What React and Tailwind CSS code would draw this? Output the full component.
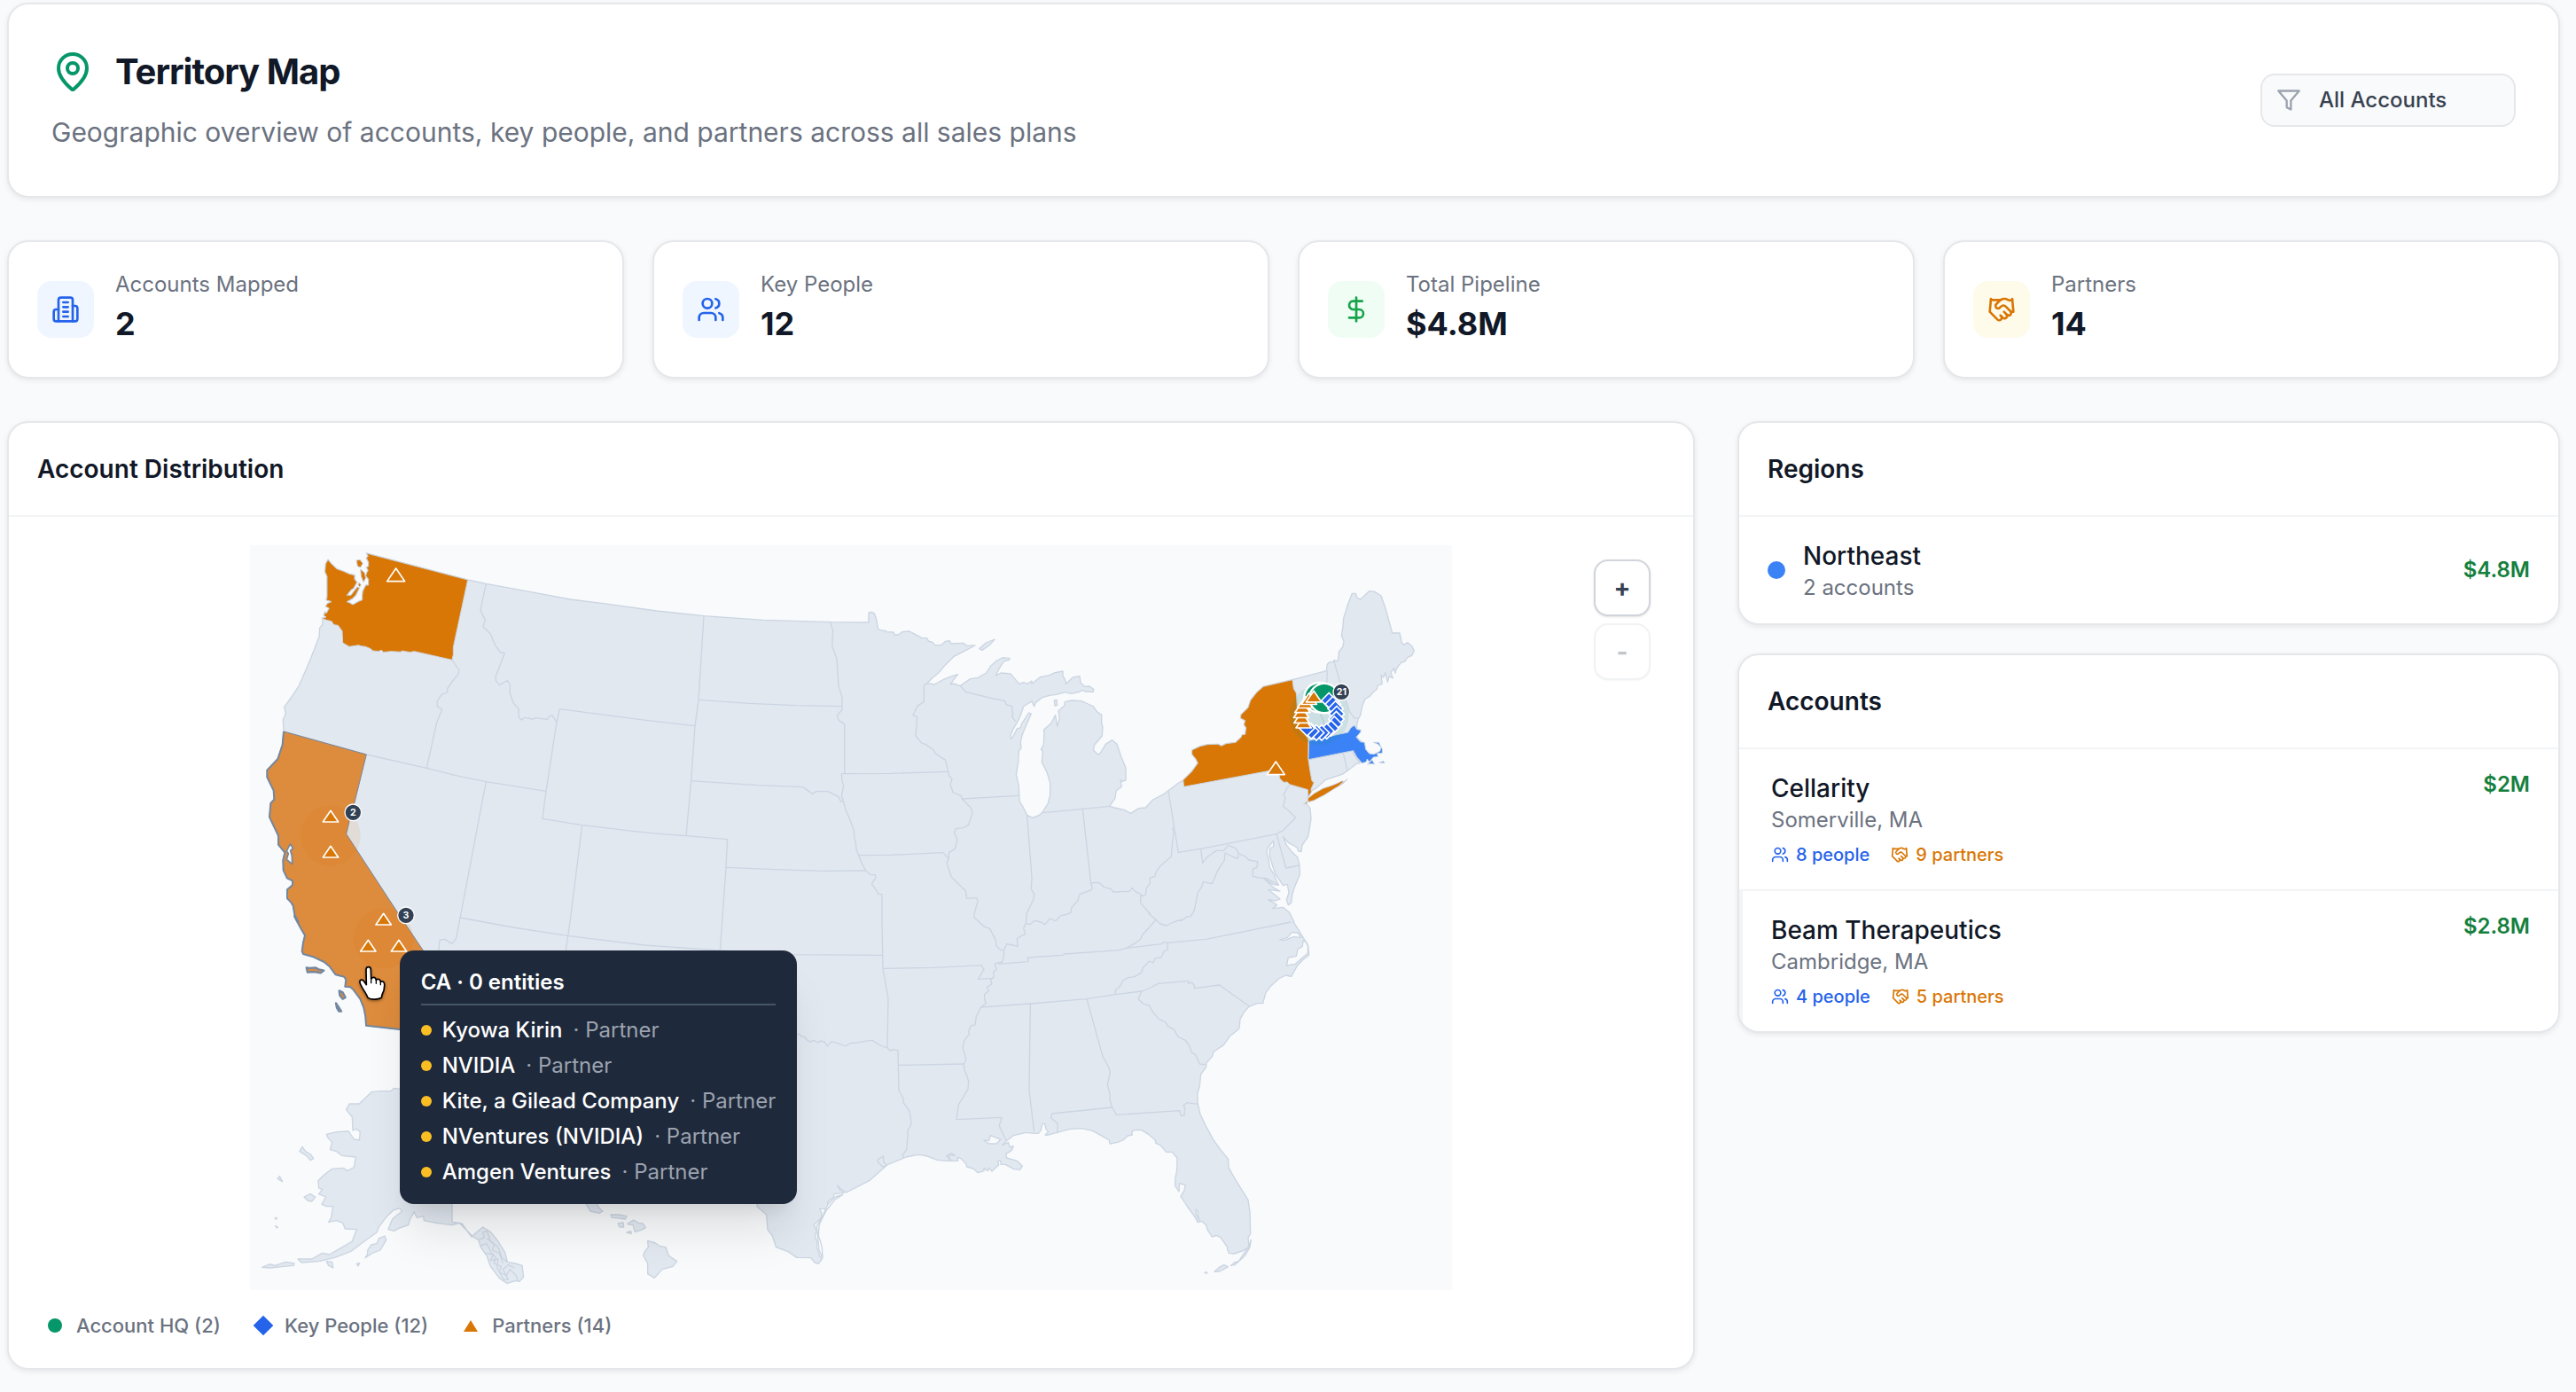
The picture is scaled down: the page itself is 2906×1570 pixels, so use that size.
import { DollarSign, Handshake, MapPin, Users } from "lucide-react";

// The map outline is stored per tile, each one with its own origin and x scale.
const TILES = {
  nw: { dx: 0, dy: 0, sx: 1 },
  n: { dx: 1350, dy: 0, sx: 1 },
  ne: { dx: 2700, dy: 0, sx: 1 },
  sw: { dx: 0, dy: 1260, sx: 1.186 },
  s: { dx: 1560, dy: 1260, sx: 1 },
  se: { dx: 2700, dy: 1260, sx: 1 },
};

const toPoints = (...segments) =>
  segments
    .map(([tile, coords]) => {
      const { dx, dy, sx } = TILES[tile];
      return coords
        .trim()
        .split(/\s+/)
        .map((pair) => {
          const [x, y] = pair.split(",").map(Number);
          return `${Math.round(x * sx + dx)},${y + dy}`;
        })
        .join(" ");
    })
    .join(" ");

const WA_COAST =
  "248,262 262,258 254,252 258,240 262,246 272,228 260,222 266,212 280,206 262,200 265,190 265,120 258,105 260,78 268,64 280,78 298,95 320,103 340,112 358,116 358,130 366,140 355,160 346,166 332,184 346,184 358,168 368,156 374,160 362,184 350,196 332,206 342,210 352,216 372,205 384,200 384,185 386,170 396,150 405,150 405,130 396,118 400,106 404,100 398,90 405,86 405,72 398,58 404,52 398,42";

const CA_COAST = [
  ["sw", "510,400 430,393 335,380 333,350 328,320 318,290 298,258 290,250 275,248 277,225 272,215 248,208 230,180 215,165 185,148 155,138 152,128 155,100 160,75 150,55 135,22 130,10"],
  ["nw", "168,1290 155,1265 150,1235 142,1222 130,1210 130,1180 148,1165 148,1150 130,1142 117,1115 116,1080 122,1055 100,1028 100,998 70,935 74,888 86,875 84,845 62,800 62,776 98,738 114,690 118,645"],
];

const MAINLAND = toPoints(
  ["nw", "398,42 741,132 803,145 950,172 1088,198 1200,212"],
  ["n", "30,237 190,254 390,268 620,275 748,276 748,243 758,241 768,247 775,270 779,297 790,303 806,304 806,308 832,309 835,318 848,318 862,308 885,306 905,316 928,329 945,329 950,339 965,344 972,353 993,353 1008,340 1022,338 1026,348 1068,346 1080,355 1108,354 1070,374 1035,392 1005,422 985,446 962,465 945,482 970,486 1003,468 1030,458 1050,452 1036,468 1025,486 1035,483 1058,491 1092,467 1118,463 1146,447 1162,422 1182,405 1203,395 1226,398 1222,404 1206,407 1190,431 1178,456 1195,447 1228,450 1245,470 1258,484 1272,479 1285,484 1300,474 1300,484 1328,461"],
  ["ne", "10,455 25,447 55,441 55,458 62,468 66,484 82,468 90,462 112,458 115,480 128,493 145,492 159,502 158,511 130,510 122,505 108,512 85,517 62,512 32,520 10,523"],
  ["n", "1335,530 1312,548 1308,560 1300,543 1285,552 1272,560 1262,590 1250,615 1235,640 1227,662 1230,670 1238,660 1250,636 1262,632 1265,620 1278,600 1290,582 1298,585 1285,615 1268,655 1262,680 1264,702 1256,710 1254,750 1247,790 1256,830 1258,880 1270,900 1284,928 1302,937 1322,930 1335,920 1355,888 1362,860 1362,820 1352,785 1334,748 1337,712 1331,706 1340,690 1342,650 1340,640 1365,618"],
  ["ne", "30,590 36,628 44,600 40,575 60,558 62,545 85,540 118,542 140,552 158,560 170,578 186,588 186,620 190,628 188,660 162,690 158,708 175,724 182,718 200,688 222,674 238,688 252,730 268,768 268,810 255,814 250,808 254,832 235,846 232,870 213,898 230,903 262,910 285,922 312,905 335,903 360,876 398,856 440,824 462,810 492,780 512,752 505,738 492,722 492,708 520,695 545,689 580,688 592,694 608,686 640,682 658,665 662,656 672,655 675,632 668,622 672,608 656,600 658,588 682,565 690,540 712,512 734,493 832,470 947,440 950,418 958,410 970,410 972,404 986,408 990,374 1002,360 1006,340 998,320 1003,290 1005,262 1018,220 1034,178 1046,178 1050,192 1062,199 1092,170 1110,172 1132,186 1148,232 1170,312 1195,312 1202,345 1210,352 1222,344 1236,356 1244,372 1236,388 1222,394 1212,408 1200,412 1190,424 1182,438 1180,448 1176,430 1165,446 1172,465 1160,458 1154,478 1146,446 1140,462 1132,455 1136,484 1120,490 1118,502 1105,512 1095,525 1078,535 1068,560 1062,590 1055,602 1050,622 1050,638 1062,645 1048,664 1075,688 1080,706 1092,720 1070,748 1048,755 1018,778 1000,790 975,798 945,808 915,835 898,845 885,870 880,890 892,905 895,940 888,985 885,1000 865,1030 862,1052 852,1050 848,1038 820,1022 806,1008 800,1000 812,1030 830,1052 850,1072 856,1098 857,1130 850,1145 838,1175 832,1195 828,1225 818,1232 812,1215 820,1190 815,1162 800,1166 790,1150 775,1128 765,1100 755,1065 756,1040 768,1035 768,1015 748,1038 745,1055 752,1080 755,1105 770,1130 778,1150 785,1165 765,1162 735,1142 770,1175 790,1185 750,1180 790,1212 775,1218 750,1214 780,1232 765,1244 800,1240 822,1258 838,1290"],
  ["se", "835,30 850,52 872,88 885,108 888,142 870,155 848,178 828,214 810,210 785,222 760,245 742,268 732,305 712,305 685,316 668,335 655,358 652,390 638,402 620,416 600,445 566,468 560,485 540,508 540,520 522,545 518,585 510,612 512,645 520,680 540,722 565,768 590,802 615,832 616,860 635,895 682,970 688,1010 690,1085 682,1098 685,1130 665,1142 635,1152 618,1150 612,1140 612,1130 588,1096 575,1090 560,1095 545,1072 540,1055 525,1042 512,1046 500,1025 475,990 454,958 465,940 470,920 450,914 448,942 435,922 436,895 441,870 442,828 425,808 405,808 385,785 370,778 368,768 345,748 320,733 295,734 288,740 290,750 275,753 258,768 240,775 214,780 212,768 190,755 155,736 118,728 80,730 35,742 0,752"],
  ["s", "1135,750 1146,740 1138,730 1134,712 1126,712 1120,735 1112,745 1098,745 1070,742 1028,752 1004,770 990,785 1010,775 1016,792 1028,788 1022,802 1002,815 1005,828 1040,838 1058,856 1050,868 1030,866 1000,850 985,850 985,838 975,838 978,852 968,860 955,873 945,862 940,872 928,862 928,872 908,878 892,864 870,858 868,848 864,845 850,830 838,826 840,838 820,838 800,822 818,812 830,820 808,818 815,838 800,838 770,835 735,822 715,818 700,818 665,825 600,852 585,858 568,840 570,832 588,822 588,842 600,852 540,905 500,925 462,945 440,930 432,920 440,935 455,946 420,950 420,960 400,975 398,1000 372,1000 378,1012 378,1030 352,1055 362,1075 356,1090 364,1115 362,1130 372,1160 380,1170 368,1186 355,1182 342,1166 295,1165 265,1145 225,1130 212,1092 196,1070 192,1020 175,1005 160,992 160,980 -100,840 -500,600"],
  ...CA_COAST,
  ["nw", "116,605 125,585 120,562 145,528 170,490 208,402 238,325 240,295 250,282 250,270"],
  ["nw", WA_COAST]
);

const ISLANDS = [
  // Isle Royale, Lake Michigan, Florida Keys
  toPoints(["n", "1122,365 1145,345 1174,333 1160,350 1132,370"]),
  toPoints(["ne", "26,540 34,538 36,556 28,558"]),
  toPoints(["se", "568,1213 585,1198 600,1190 614,1196 600,1204 585,1212"]),
  toPoints(["se", "692,1105 688,1130 672,1158 650,1178 665,1155 682,1132"]),
  toPoints(["se", "650,1178 636,1182 624,1192 636,1190"]),
  toPoints(["se", "535,1217 540,1214 544,1218"]),
  // Alaska
  toPoints(["sw", "440,596 415,592 405,602 375,602 350,605 315,645 287,645 278,665 295,690 297,735 308,730 318,740 315,768 300,765 285,738 250,740 222,748 226,760 238,775 232,800 250,806 265,820 305,825 300,860 282,872 270,862 238,865 215,885 198,905 200,930 210,935 200,950 220,960 208,985 222,992 240,992 235,1030 228,1045 250,1040 268,1048 275,1068 308,1070 295,1110 260,1135 230,1155 210,1150 180,1170 140,1170 150,1182 200,1178 245,1165 290,1145 330,1110 365,1080 372,1060 395,1025 412,1005 430,998 438,1008 425,1020 410,1035 398,1070 415,1075 430,1065 455,1055 460,1035 472,1010 480,1030 498,1025 500,1040 535,1048 580,1055 600,1048 620,1070 640,1095 655,1105 662,1130 680,1160 690,1195 715,1235 738,1253 748,1248 762,1244 772,1246 784,1230 780,1192 760,1185 738,1180 732,1150 712,1110 690,1078 668,1062 652,1078 636,1095 608,1050 580,1045 580,560"]),
  toPoints(["sw", "38,1198 60,1188 75,1192 105,1180 130,1185 128,1192 100,1195 60,1200"]),
  toPoints(["sw", "340,1138 350,1122 365,1118 372,1100 388,1092 392,1105 375,1140 350,1152 332,1166 338,1155"]),
  toPoints(["sw", "145,806 153,790 162,806 176,816 185,830 175,836 164,820"]),
  toPoints(["sw", "158,960 175,950 190,960 180,975 168,972"]),
  toPoints(["sw", "82,898 88,890 96,908"]),
  toPoints(["sw", "74,1032 80,1030 78,1036"]),
  toPoints(["sw", "76,1058 83,1062 80,1065"]),
  toPoints(["sw", "308,1186 316,1184 312,1194"]),
  toPoints(["sw", "222,1178 238,1180 240,1200 228,1192"]),
  // Hawaii
  toPoints(["sw", "962,982 992,982 1000,998 1010,1008 1000,1015 975,1008"]),
  toPoints(["sw", "1033,1020 1056,1020 1078,1025 1074,1035 1050,1031 1036,1030"]),
  toPoints(["sw", "1053,1050 1068,1047 1070,1062 1058,1062"]),
  toPoints(["sw", "1080,1052 1098,1038 1112,1048 1125,1050 1132,1064 1120,1072 1102,1078 1096,1055"]),
  toPoints(["sw", "1078,1080 1090,1076 1092,1084"]),
  toPoints(["sw", "1140,1130 1138,1108 1160,1116 1172,1126 1190,1130 1198,1158 1206,1165 1222,1178 1210,1195 1180,1205 1158,1234 1138,1220 1138,1185 1126,1158 1130,1145"]),
];

const WATER = [
  toPoints(["s", "928,768 945,770 950,752 965,758 985,765 970,780 945,780 932,772"]),
  toPoints(["se", "790,90 815,82 830,65 850,66 862,82 835,80 805,92"]),
  toPoints(["se", "868,92 878,98 884,110 884,136 864,152 842,172 818,176 812,178 818,150 845,145 850,122 866,112"]),
  toPoints(["se", "505,1002 512,1006 512,1024 518,1040 506,1020"]),
  toPoints(["s", "450,952 425,968 395,1005 374,1045 370,1058 368,1090 380,1130 382,1166 370,1140 365,1090 362,1060 385,1018 400,985 425,960"]),
];

const BORDERS = [
  toPoints(["nw", "803,145 784,235 800,268 793,290 818,315 833,352 852,378 866,380 835,460 836,472 848,488 875,473 884,485 884,515 895,548 913,568 914,598 925,606 932,598 960,603 972,599 1010,604 1018,593 1027,590 1042,614"]),
  toPoints(["nw", "1006,847 1042,614 1052,569"], ["n", "-70,599 0,608 160,626"]),
  toPoints(["nw", "1006,847 994,940 1128,962"], ["n", "0,988 130,998 270,1010 265,1105 252,1290"], ["s", "35,126"]),
  toPoints(["nw", "688,403 712,438 710,450 690,474 672,500 672,512 652,520 638,543 638,560 654,570 636,615 602,769"]),
  toPoints(["nw", "118,645 398,723 602,769 700,794 803,815 1006,847"]),
  toPoints(["nw", "803,815 715,1277"], ["sw", "592,85 580,103 572,98 560,88 545,90 542,126"]),
  toPoints(["nw", "1128,962 1087,1290"], ["sw", "905,126"]),
  toPoints(["sw", "603,15 755,48 912,77 1130,108 1342,126"], ["s", "272,140 584,142"]),
  toPoints(["n", "190,254 172,538 160,626 147,812 130,998"]),
  toPoints(["n", "172,538 345,550 500,557 658,560"]),
  toPoints(["n", "618,275 627,305 624,355 640,400 646,490 658,530 658,572 641,590 646,606 666,620 666,788"]),
  toPoints(["n", "147,812 370,827 525,833 558,856 570,848 610,848 645,865 655,883 663,883"]),
  toPoints(
    ["n", "656,788 658,812 663,830 656,862 663,883 670,910 684,942 698,980 700,1010 704,1020 706,1045 714,1064 725,1092 738,1116 755,1130 770,1130 771,1142 758,1160 782,1195 793,1197 793,1290"],
    ["s", "586,186 604,290 601,456"]
  ),
  toPoints(["n", "656,788 820,787 1017,781"]),
  toPoints(
    ["n", "945,482 935,490 935,544 912,560 898,590 912,596 907,660 928,685 940,688 968,708 972,718 1008,742 1017,781 1020,795 1030,805 1024,825 1034,852 1060,862 1064,873 1095,905 1099,922 1085,962 1068,971 1042,974 1038,990 1048,1010 1040,1042 1020,1055 1018,1078 1012,1090 1028,1138 1076,1184 1080,1210 1112,1208 1118,1218 1105,1262"],
    ["s", "895,14 928,45 948,52 968,92 970,110 985,125 995,125"]
  ),
  toPoints(["n", "1064,873 1256,862"]),
  toPoints(["n", "1058,491 1078,512 1170,534 1208,541 1214,554 1233,560 1236,590 1232,592 1245,612"]),
  toPoints(["n", "1284,930 1300,1140 1298,1178 1308,1195 1305,1215 1282,1262"], ["s", "1070,35 1062,50 1068,70 1040,85 1042,112 1025,108 1005,104 995,125"]),
  toPoints(["n", "1335,920 1380,916"], ["ne", "122,907 213,898"]),
  toPoints(["n", "714,1064 820,1063 1000,1055 1018,1076"]),
  toPoints(["n", "265,1105 430,1112 590,1117 738,1116"]),
  toPoints(["ne", "122,907 150,1158"]),
  toPoints(["s", "1070,35 1085,37 1100,25 1120,30 1134,38 1152,18 1170,26 1188,8"], ["ne", "68,1264 82,1258 85,1240 105,1218 112,1196 150,1182 155,1175 150,1158 168,1156 180,1158 195,1172 218,1178 225,1188 280,1186 290,1174 300,1186 318,1195 325,1202 335,1198 338,1175 350,1160 350,1140 366,1136 372,1118 385,1100 422,1068 426,1020 430,985 426,976 432,970"]),
  toPoints(["ne", "412,846 432,970 446,1054 522,1042 778,992 800,980 825,955 843,937 818,912 800,898 808,870 802,860 812,840 820,828"]),
  toPoints(["ne", "778,992 810,1107 856,1098"]),
  toPoints(["ne", "522,1042 528,1090 542,1072 560,1058 575,1048 600,1048 614,1030 640,1040 650,1058 672,1068 685,1080 714,1085 712,1105 698,1110 698,1135 720,1140 745,1142 785,1165"]),
  toPoints(["ne", "650,1060 646,1076 604,1056 602,1080 578,1118 560,1160 530,1154 524,1172 512,1190 500,1250 488,1270 475,1272 455,1286"], ["se", "455,22 430,30 405,42 385,36 345,0"], ["ne", "350,1262 318,1225 318,1200"]),
  toPoints(["se", "372,20 350,45 325,72 318,88 302,100 270,118"]),
  toPoints(["s", "975,172 1078,164 1076,150 1195,142"], ["se", "60,138 245,125 270,118 390,104 395,98 410,100 540,88 827,30"]),
  toPoints(["se", "410,100 409,124 398,128 388,150 368,152 360,168 348,162 325,186 322,200 298,215 275,218 258,228 248,248 233,260 233,275"]),
  toPoints(["s", "918,318 1085,306 1276,290"], ["se", "233,275 322,264 345,255 378,238 480,229 480,238 490,234 500,244 500,254 585,243 686,315"]),
  toPoints(["s", "995,125 996,140 990,165 965,170 970,190 960,200 962,215 950,225 955,240 938,250 945,262 930,275 930,290 935,305 918,318 902,350 898,378 885,380 876,398 878,410 862,430 856,455 862,475 868,495 860,510 862,530 872,555 876,570 874,595 842,648 835,698 988,691 980,720 1004,770"]),
  toPoints(["s", "588,187 760,184 920,176 928,190 908,223 960,220"]),
  toPoints(["s", "640,514 860,510"]),
  toPoints(["s", "282,408 292,412 302,408 310,416 322,420 330,430 340,436 350,430 368,438 375,432 390,436 398,450 412,434 440,442 460,450 475,440 500,438 520,434 550,430 575,446 601,456 612,466 620,461 637,464 638,514 640,600 655,625 655,640 675,668 680,690 682,715 670,735 670,760 666,800 652,820 658,828"]),
  toPoints(["s", "1085,306 1081,600 1098,740"]),
  toPoints(["s", "1276,290 1330,485 1350,520 1355,540 1346,580 1354,610 1355,635 1362,657 1376,682"], ["se", "240,682 450,668 455,685 466,684 468,660 463,650 475,641 512,646"]),
  toPoints(["s", "1176,745 1178,712 1155,692 1158,678 1362,657"]),
  toPoints(["se", "322,264 310,290 330,308 348,312 360,335 380,358 402,368 410,382 432,394 445,418 470,430 484,450 490,470 505,480 518,510 540,512"]),
  toPoints(["ne", "950,440 948,490 932,520 928,590 938,610 936,664"]),
  toPoints(["ne", "972,404 992,475 1010,530 1026,578 1040,598 1056,602"]),
  toPoints(["ne", "886,740 1034,710 1048,735 1060,750"]),
  toPoints(["ne", "1004,718 1018,778"]),
];

const ACTIVE_STATES = [
  // WA
  {
    fill: "#d97706",
    points: toPoints(
      ["nw", WA_COAST],
      ["nw", "741,132 692,360 692,385 688,403 560,374 545,377 518,372 515,376 480,374 455,377 450,370 438,374 420,372 412,365 395,358 380,356 372,353 340,358 318,345 316,305 302,286 288,284 280,272 262,268"]
    ),
  },
  { fill: "#d97706", points: toPoints(["nw", "364,66 376,64 386,76 378,90 368,86"]) },
  { fill: "#d97706", points: toPoints(["nw", "378,96 392,108 396,126 388,140 380,120"]) },
  { fill: "#d97706", points: toPoints(["nw", "372,142 380,148 376,156 370,150"]) },
  // NY with Long Island
  {
    fill: "#d97706",
    points: toPoints(
      ["ne", "462,810 492,780 512,752 505,738 492,722 492,708 520,695 545,689 580,688 592,694 608,686 640,682 658,665 662,656 672,655 675,632 668,622 672,608 656,600 658,588 682,565 690,540 712,512 734,493 832,470 836,500 845,515 848,560 850,600 870,640 886,672 886,740 892,780 898,812 905,818 895,840 896,850 885,866 884,842 822,824 815,816 802,817 790,805 785,785 755,778 465,832"]
    ),
  },
  { fill: "#d97706", points: toPoints(["ne", "884,872 905,855 935,838 965,828 985,820 1000,812 1005,815 992,826 1018,806 1002,822 975,838 940,860 905,878 886,884"]) },
  { fill: "#d97706", points: toPoints(["ne", "870,892 880,882 882,888"]) },
  // MA with the islands
  {
    fill: "#3b82f6",
    points: toPoints(
      ["ne", "888,676 1020,648 1030,632 1042,624 1050,638 1064,640 1062,648 1048,664 1062,680 1076,682 1080,706 1092,720 1108,722 1128,712 1132,700 1122,688 1106,682 1124,682 1136,705 1136,718 1118,720 1122,730 1106,732 1092,748 1085,738 1082,748 1068,752 1050,732 1038,710 886,740"]
    ),
  },
  { fill: "#3b82f6", points: toPoints(["ne", "1086,756 1102,742 1110,756 1098,754"]) },
  { fill: "#3b82f6", points: toPoints(["ne", "1126,750 1140,746 1144,752"]) },
];

const CA_FILL = toPoints(
  ["nw", "118,645 398,723 358,885 340,950 330,992 500,1252 590,1386 620,1500 560,1660"],
  ...CA_COAST
);

const CA_ISLANDS = [
  toPoints(["sw", "164,184 174,186 190,184 200,190 214,194 205,202 186,198 168,200"]),
  toPoints(["sw", "258,262 268,268 276,285 268,290 260,278"]),
  toPoints(["sw", "249,304 256,318 264,332 257,332 251,320"]),
];

const BAY = toPoints(["nw", "140,1026 150,1040 141,1048 146,1066 147,1094 128,1078 134,1058 128,1050"]);

const ring = (cx, cy, count, index, r = 60) => {
  const angle = (index / count) * Math.PI * 2 - Math.PI / 2;
  return [cx + r * Math.cos(angle), cy + r * Math.sin(angle)];
};

const CLUSTERS = [
  { cx: 277, cy: 998, kinds: ["partner", "partner"], halo: "#d97706" },
  { cx: 456, cy: 1346, kinds: ["partner", "partner", "partner"], halo: "#d97706" },
  {
    cx: 3622,
    cy: 590,
    kinds: [...Array(2).fill("hq"), ...Array(12).fill("person"), ...Array(7).fill("partner")],
    halo: "#059669",
  },
];

const tooltipPartners = ["Kyowa Kirin", "NVIDIA", "Kite, a Gilead Company", "NVentures (NVIDIA)", "Amgen Ventures"];

const accounts = [
  { name: "Cellarity", place: "Somerville, MA", people: 8, partners: 9, value: "$2M", border: "border-l-transparent" },
  { name: "Beam Therapeutics", place: "Cambridge, MA", people: 4, partners: 5, value: "$2.8M", border: "border-l-gray-100 border-t-2 border-t-gray-100" },
];

function BuildingIcon({ className }) {
  return (
    <svg className={className} viewBox="0 0 24 24" fill="none" stroke="currentColor" strokeWidth="2" strokeLinecap="round" strokeLinejoin="round" aria-hidden="true">
      <path d="M6 22V4a2 2 0 0 1 2-2h8a2 2 0 0 1 2 2v18Z" />
      <path d="M6 12H4a2 2 0 0 0-2 2v6a2 2 0 0 0 2 2h2" />
      <path d="M18 9h2a2 2 0 0 1 2 2v9a2 2 0 0 1-2 2h-2" />
      <path d="M10 6h4M10 10h4M10 14h4M10 18h4" />
    </svg>
  );
}

function FilterIcon({ className }) {
  return (
    <svg className={className} viewBox="0 0 24 24" fill="none" stroke="currentColor" strokeWidth="2" strokeLinecap="round" strokeLinejoin="round" aria-hidden="true">
      <polygon points="22 3 2 3 10 12.46 10 19 14 21 14 12.46 22 3" />
    </svg>
  );
}

const stats = [
  { label: "Accounts Mapped", value: "2", icon: BuildingIcon, tone: "bg-[#eff6ff] text-[#2563eb]" },
  { label: "Key People", value: "12", icon: Users, tone: "bg-[#eff6ff] text-[#2563eb]" },
  { label: "Total Pipeline", value: "$4.8M", icon: DollarSign, tone: "bg-[#f0fdf4] text-[#16a34a]" },
  { label: "Partners", value: "14", icon: Handshake, tone: "bg-[#fffbeb] text-[#d97706]" },
];

function Card({ className = "", children }) {
  return (
    <section className={`rounded-3xl border-2 border-[#e5e7eb] bg-white shadow-[0_2px_6px_rgba(0,0,0,0.08)] ${className}`}>
      {children}
    </section>
  );
}

function CardHeader({ children }) {
  return (
    <h2 className="border-b-2 border-[#f3f4f6] p-8 text-[28px] leading-10 font-semibold text-[#111827]">
      {children}
    </h2>
  );
}

function Marker({ kind, x, y, scale = 1 }) {
  if (kind === "hq") {
    return <circle cx={x} cy={y} r="50" fill="#059669" stroke="#fff" strokeWidth="7" />;
  }
  if (kind === "person") {
    return <path d={`M${x} ${y - 26}l26 26l-26 26l-26 -26Z`} fill="#2563eb" stroke="#fff" strokeWidth="5" />;
  }
  const w = 26 * scale;
  return (
    <path
      d={`M${x} ${y - 25 * scale}L${x + w} ${y + 13 * scale}H${x - w}Z`}
      fill="#d97706"
      stroke="#fff"
      strokeWidth="5"
      strokeLinejoin="round"
    />
  );
}

function Cluster({ cx, cy, kinds, halo }) {
  return (
    <g>
      <circle cx={cx} cy={cy} r="101" fill={halo} opacity="0.1" />
      {kinds.map((kind, i) => {
        const [x, y] = ring(cx, cy, kinds.length, i);
        return <Marker key={i} kind={kind} x={x} y={y} />;
      })}
      <circle cx={cx + 76} cy={cy - 79} r="28" fill="#334155" stroke="#fff" strokeWidth="4" />
      <text x={cx + 76} y={cy - 68} textAnchor="middle" fontSize="32" fontWeight="700" fill="#fff">
        {kinds.length}
      </text>
    </g>
  );
}

function UsMap() {
  return (
    <svg className="block h-[840px] max-w-full" viewBox="4 15 4070 2520" role="img" aria-label="Map of the United States">
      <rect x="4" y="15" width="4070" height="2520" fill="#f8fafc" />
      <g fill="#e2e8f0" stroke="#cbd5e1" strokeWidth="4" strokeLinejoin="round">
        <polygon points={MAINLAND} />
        {ISLANDS.map((points) => (
          <polygon key={points} points={points} />
        ))}
        <g fill="#f8fafc">
          {WATER.map((points) => (
            <polygon key={points} points={points} />
          ))}
        </g>
        <g fill="none" strokeWidth="4">
          {BORDERS.map((points) => (
            <polyline key={points} points={points} />
          ))}
          {/* Southeast Alaska channels */}
          <polyline points={toPoints(["sw", "655,1105 672,1098 668,1080 680,1075 690,1110 712,1130 722,1165 738,1180"])} />
          <polyline points={toPoints(["sw", "660,1125 680,1118 692,1150 705,1165 700,1185 720,1195 715,1215 735,1225 745,1205 762,1225 768,1245"])} />
          <polyline points={toPoints(["sw", "676,1150 698,1155 690,1175 712,1170 708,1200 728,1240 740,1240 725,1205 740,1190 758,1200"])} />
          <polyline points={toPoints(["sw", "680,1100 700,1120 695,1140 715,1150 725,1185"])} />
        </g>
        {ACTIVE_STATES.map(({ fill, points }) => (
          <polygon key={points} points={points} fill={fill} strokeWidth="3" />
        ))}
      </g>
      <g stroke="#7387a0" strokeLinejoin="round">
        <polygon points={CA_FILL} fill="#dd8b3c" strokeWidth="3" />
        <polyline points={toPoints(...CA_COAST)} fill="none" strokeWidth="6" />
        {CA_ISLANDS.map((points) => (
          <polygon key={points} points={points} fill="#dd8b3c" strokeWidth="7" />
        ))}
        <polygon points={BAY} fill="#f8fafc" strokeWidth="5" />
      </g>
      {CLUSTERS.map((cluster) => (
        <Cluster key={cluster.cx} {...cluster} />
      ))}
      <Marker kind="partner" x={498} y={122} scale={1.15} />
      <Marker kind="partner" x={3476} y={776} scale={1.15} />
      {/* Hand pointer */}
      <path
        d="M397 1451C397 1439 413 1439 413 1451L414 1482C420 1474 430 1476 431 1486C437 1480 445 1484 446 1492C452 1488 459 1492 459 1500C460 1518 457 1526 451 1536L449 1546C436 1553 414 1553 403 1546C398 1530 378 1508 376 1494C374 1484 386 1482 391 1492L398 1502Z"
        fill="#fff"
        stroke="#000"
        strokeWidth="5"
        strokeLinejoin="round"
        className="drop-shadow-[0_4px_4px_rgba(0,0,0,0.4)]"
      />
      <path d="M414 1480V1496M431 1486V1498M446 1492V1502" stroke="#000" strokeWidth="4" strokeLinecap="round" />
    </svg>
  );
}

function MapTooltip() {
  return (
    <div
      role="tooltip"
      className="absolute top-[457px] left-[169px] rounded-2xl bg-[#1e293b] px-6 py-5 text-2xl leading-8 whitespace-nowrap text-white shadow-[0_40px_50px_-10px_rgba(0,0,0,0.1),0_16px_20px_-12px_rgba(0,0,0,0.1)]"
    >
      <p className="mb-3 border-b-2 border-[#475569] pb-2 font-semibold">CA · 0 entities</p>
      <ul className="flex flex-col gap-2">
        {tooltipPartners.map((name) => (
          <li key={name} className="flex items-center gap-3">
            <span className="size-3 rounded-full bg-[#fbbf24]" />
            <span className="font-medium">{name}</span>
            <span className="text-[#9ca3af]">· Partner</span>
          </li>
        ))}
      </ul>
    </div>
  );
}

function Legend() {
  const items = [
    { label: "Account HQ (2)", mark: <span className="size-4 rounded-full bg-[#059669]" /> },
    { label: "Key People (12)", mark: <span className="size-4 rotate-45 bg-[#2563eb]" /> },
    {
      label: "Partners (14)",
      mark: (
        <svg className="size-4" viewBox="0 0 16 16" aria-hidden="true">
          <path d="M8 2l8 13H0Z" fill="#d97706" />
        </svg>
      ),
    },
  ];
  return (
    <ul className="mt-6 flex gap-9 px-2 text-[22px] leading-8 font-medium text-[#6b7280]">
      {items.map(({ label, mark }) => (
        <li key={label} className="flex items-center gap-3">
          <span className="flex size-6 items-center justify-center">{mark}</span>
          {label}
        </li>
      ))}
    </ul>
  );
}

export default function App() {
  return (
    <main className="flex min-h-screen flex-col gap-12 bg-[#f8fafc] pt-[3px] pr-[18px] pb-6 pl-2 font-['Inter',sans-serif] text-[#111827]">
      <Card className="flex items-center justify-between p-12">
        <div>
          <div className="flex h-14 items-center gap-6">
            <MapPin className="size-12 text-[#059669]" />
            <h1 className="text-[40px] leading-[56px] font-bold tracking-tight">Territory Map</h1>
          </div>
          <p className="mt-4 text-[30px] leading-[48px] text-[#6b7280]">
            Geographic overview of accounts, key people, and partners across all sales plans
          </p>
        </div>
        <div className="flex h-[60px] w-72 items-center rounded-2xl border-2 border-[#e5e7eb] bg-[#f9fafb] pl-4">
          <FilterIcon className="size-7 shrink-0 text-[#9ca3af]" />
          <select
            aria-label="Filter accounts"
            className="ml-5 min-w-0 flex-1 appearance-none bg-transparent text-2xl font-medium text-[#374151] outline-none"
          >
            <option>All Accounts</option>
          </select>
        </div>
      </Card>

      <div className="grid grid-cols-4 gap-8">
        {stats.map(({ label, value, icon: Icon, tone }) => (
          <Card key={label} className="flex items-center gap-6 p-8">
            <span className={`flex size-16 items-center justify-center rounded-2xl ${tone}`}>
              <Icon className="size-8" />
            </span>
            <dl>
              <dt className="text-2xl leading-8 text-[#6b7280]">{label}</dt>
              <dd className="text-4xl leading-[56px] font-bold">{value}</dd>
            </dl>
          </Card>
        ))}
      </div>

      <div className="grid grid-cols-3 items-start gap-12">
        <Card className="col-span-2">
          <CardHeader>Account Distribution</CardHeader>
          <div className="relative p-8">
            <div className="relative mx-auto w-fit">
              <UsMap />
              <MapTooltip />
            </div>
            <div className="absolute top-12 right-12 flex flex-col gap-2">
              <button type="button" aria-label="Zoom in" className="size-16 rounded-2xl border-2 border-[#d1d5db] bg-white text-[28px] font-bold text-[#374151] shadow-sm">
                +
              </button>
              <button type="button" aria-label="Zoom out" disabled className="size-16 rounded-2xl border-2 border-[#d1d5db] bg-white text-[28px] font-bold text-[#374151] opacity-30 shadow-sm">
                -
              </button>
            </div>
            <Legend />
          </div>
        </Card>

        <div className="flex flex-col gap-8">
          <Card>
            <CardHeader>Regions</CardHeader>
            <div className="flex items-center gap-5 px-8 py-6">
              <span className="size-5 rounded-full bg-[#3b82f6]" />
              <div className="flex-1">
                <p className="text-[28px] leading-10 font-medium">Northeast</p>
                <p className="text-2xl leading-8 text-[#6b7280]">2 accounts</p>
              </div>
              <span className="text-2xl leading-8 font-semibold text-[#15803d]">$4.8M</span>
            </div>
          </Card>

          <Card className="overflow-hidden">
            <CardHeader>Accounts</CardHeader>
            {accounts.map((account) => (
              <article key={account.name} className={`flex items-start justify-between border-l-4 px-8 py-6 ${account.border}`}>
                <div>
                  <h3 className="text-[28px] leading-10 font-medium">{account.name}</h3>
                  <p className="text-2xl leading-8 text-[#6b7280]">{account.place}</p>
                  <div className="mt-2 flex gap-6 text-xl leading-[30px] font-medium">
                    <span className="flex items-center gap-2 text-[#2563eb]">
                      <Users className="size-5" />
                      {account.people} people
                    </span>
                    <span className="flex items-center gap-2 text-[#d97706]">
                      <Handshake className="size-5" />
                      {account.partners} partners
                    </span>
                  </div>
                </div>
                <span className="text-2xl leading-8 font-semibold text-[#15803d]">{account.value}</span>
              </article>
            ))}
          </Card>
        </div>
      </div>
    </main>
  );
}
